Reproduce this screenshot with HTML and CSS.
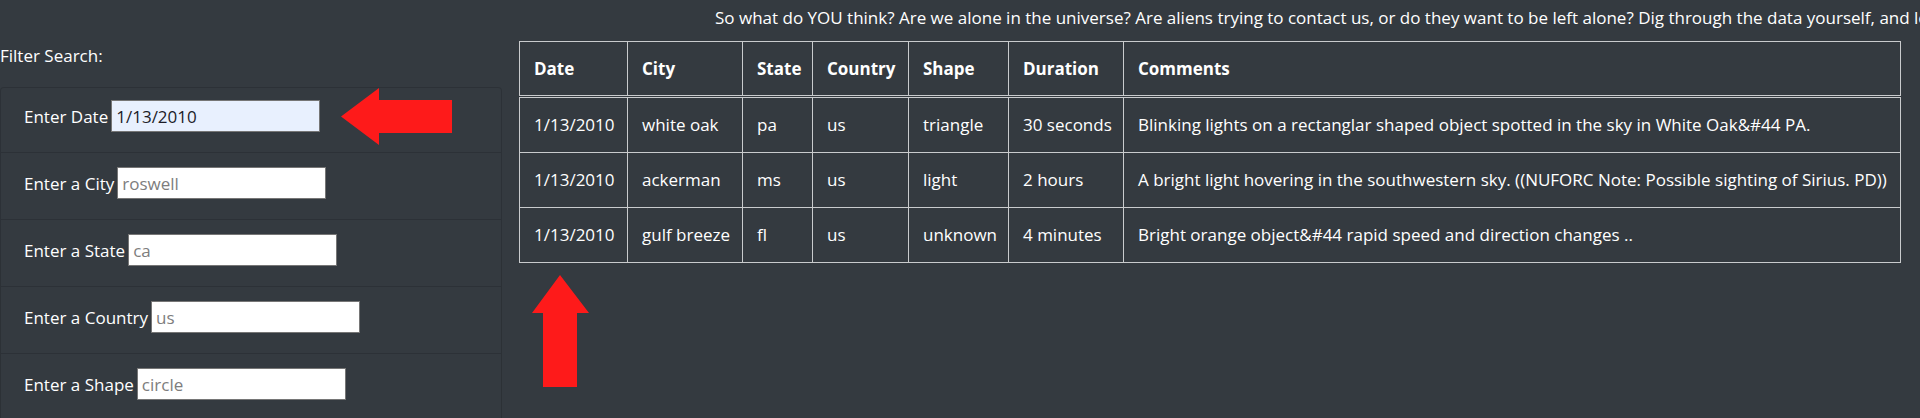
FILE: index.html
```html
<!DOCTYPE html>
<html lang="en">
<head>
<meta charset="utf-8">
<title>UFO Sightings</title>
<link rel="stylesheet" href="styles.css">
</head>
<body>
  <header class="intro">
    <p class="intro-text">So what do YOU think? Are we alone in the universe? Are aliens trying to contact us, or do they want to be left alone? Dig through the data yourself, and let us know what you find out there in the great beyond.</p>
  </header>

  <main class="main">
    <aside class="filters">
      <div class="filters-title">Filter Search:</div>
      <ul class="filter-list">
        <li class="filter-item">
          <label for="datetime">Enter Date</label>
          <input class="filter-input filled" id="datetime" type="text" value="1/13/2010">
        </li>
        <li class="filter-item">
          <label for="city">Enter a City</label>
          <input class="filter-input" id="city" type="text" placeholder="roswell">
        </li>
        <li class="filter-item">
          <label for="state">Enter a State</label>
          <input class="filter-input" id="state" type="text" placeholder="ca">
        </li>
        <li class="filter-item">
          <label for="country">Enter a Country</label>
          <input class="filter-input" id="country" type="text" placeholder="us">
        </li>
        <li class="filter-item">
          <label for="shape">Enter a Shape</label>
          <input class="filter-input" id="shape" type="text" placeholder="circle">
        </li>
      </ul>
    </aside>

    <section class="results">
      <table class="ufo-table">
        <colgroup>
          <col class="c-date">
          <col class="c-city">
          <col class="c-state">
          <col class="c-country">
          <col class="c-shape">
          <col class="c-duration">
          <col class="c-comments">
        </colgroup>
        <thead>
          <tr>
            <th>Date</th>
            <th>City</th>
            <th>State</th>
            <th>Country</th>
            <th>Shape</th>
            <th>Duration</th>
            <th>Comments</th>
          </tr>
        </thead>
        <tbody>
          <tr>
            <td>1/13/2010</td>
            <td>white oak</td>
            <td>pa</td>
            <td>us</td>
            <td>triangle</td>
            <td>30 seconds</td>
            <td>Blinking lights on a rectanglar shaped object spotted in the sky in White Oak&amp;#44 PA.</td>
          </tr>
          <tr>
            <td>1/13/2010</td>
            <td>ackerman</td>
            <td>ms</td>
            <td>us</td>
            <td>light</td>
            <td>2 hours</td>
            <td>A bright light hovering in the southwestern sky. ((NUFORC Note: Possible sighting of Sirius. PD))</td>
          </tr>
          <tr>
            <td>1/13/2010</td>
            <td>gulf breeze</td>
            <td>fl</td>
            <td>us</td>
            <td>unknown</td>
            <td>4 minutes</td>
            <td>Bright orange object&amp;#44 rapid speed and direction changes ..</td>
          </tr>
        </tbody>
      </table>
    </section>
  </main>

  <svg class="arrow arrow-left" width="113" height="59" viewBox="0 0 113 59" aria-hidden="true">
    <polygon points="1,29.5 39,1 39,13 112,13 112,46 39,46 39,58" />
  </svg>
  <svg class="arrow arrow-up" width="59" height="114" viewBox="0 0 59 114" aria-hidden="true">
    <polygon points="29,1 58,39 46,39 46,113 12,113 12,39 1,39" />
  </svg>
</body>
</html>
```
FILE: styles.css
```css
* { box-sizing: border-box; }

html, body {
  margin: 0;
  padding: 0;
}

body {
  position: relative;
  width: 1920px;
  height: 418px;
  overflow: hidden;
  background: #343a40;
  color: #ffffff;
  font-family: "Open Sans", "Noto Sans", sans-serif;
  font-size: 17px;
  line-height: 25px;
}

/* intro line */
.intro {
  height: 41px;
  padding: 5px 0 0 715px;
  overflow: hidden;
}
.intro-text {
  margin: 0;
  white-space: nowrap;
}

/* main layout */
.main {
  display: flex;
  align-items: flex-start;
  gap: 17px;
  padding-right: 19px;
}

/* filters */
.filters {
  width: 502px;
  flex: none;
}
.filters-title {
  margin-top: 2px;
  margin-bottom: 19px;
}
.filter-list {
  list-style: none;
  margin: 0;
  padding: 0;
  border: 1px solid rgba(0, 0, 0, 0.14);
  border-bottom: none;
  border-radius: 4px 4px 0 0;
}
.filter-item {
  display: flex;
  align-items: center;
  gap: 3px;
  padding: 14px 23px 20px;
  border-bottom: 1px solid rgba(0, 0, 0, 0.14);
}
.filter-item:first-child {
  padding-top: 12px;
}
.filter-item label {
  color: #ffffff;
  white-space: nowrap;
}
.filter-input {
  width: 209px;
  height: 32px;
  padding: 0 4px;
  border: 1px solid #767676;
  border-radius: 0;
  background: #ffffff;
  color: #212529;
  font-family: inherit;
  font-size: 17px;
  outline: none;
}
.filter-input::placeholder {
  color: #7d7d7d;
  opacity: 1;
}
.filter-input.filled {
  background: #e8f0fe;
  color: #1c1c28;
}

/* results table */
.results {
  flex: 1;
  min-width: 0;
}
.ufo-table {
  width: 100%;
  table-layout: fixed;
  border-collapse: collapse;
  background: #343a40;
  color: #ffffff;
}
.c-date { width: 108px; }
.c-city { width: 115px; }
.c-state { width: 70px; }
.c-country { width: 96px; }
.c-shape { width: 100px; }
.c-duration { width: 115px; }
.c-comments { width: auto; }

.ufo-table th,
.ufo-table td {
  border: 1px solid #c9cbcd;
  padding: 14px 14px 15px;
  text-align: left;
  vertical-align: middle;
  white-space: nowrap;
}
.ufo-table th {
  font-weight: 700;
  padding-bottom: 14px;
}
.ufo-table thead th {
  border-bottom: 3px double #c9cbcd;
}

/* annotation arrows */
.arrow {
  position: absolute;
  fill: #fe1a1a;
}
.arrow-left {
  left: 340px;
  top: 87px;
}
.arrow-up {
  left: 531px;
  top: 274px;
}
```
